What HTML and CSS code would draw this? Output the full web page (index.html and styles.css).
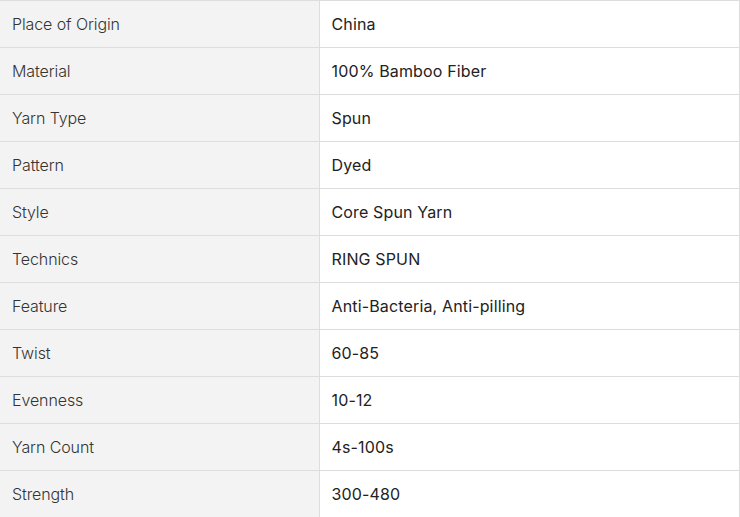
FILE: index.html
```html
<!DOCTYPE html>
<html lang="en">
<head>
<meta charset="utf-8">
<title>Specifications</title>
<link rel="stylesheet" href="styles.css">
</head>
<body>
<table class="spec">
  <tbody>
    <tr><th>Place of Origin</th><td>China</td></tr>
    <tr><th>Material</th><td>100% Bamboo Fiber</td></tr>
    <tr><th>Yarn Type</th><td>Spun</td></tr>
    <tr><th>Pattern</th><td>Dyed</td></tr>
    <tr><th>Style</th><td>Core Spun Yarn</td></tr>
    <tr><th>Technics</th><td>RING SPUN</td></tr>
    <tr><th>Feature</th><td>Anti-Bacteria, Anti-pilling</td></tr>
    <tr><th>Twist</th><td>60-85</td></tr>
    <tr><th>Evenness</th><td>10-12</td></tr>
    <tr><th>Yarn Count</th><td>4s-100s</td></tr>
    <tr><th>Strength</th><td>300-480</td></tr>
  </tbody>
</table>
</body>
</html>
```
FILE: styles.css
```css
html, body {
  margin: 0;
  padding: 0;
  background: #fff;
}
.spec {
  width: 740px;
  border-collapse: collapse;
  table-layout: fixed;
  font-family: Inter, "Liberation Sans", sans-serif;
  font-size: 16px;
}
.spec th,
.spec td {
  height: 47px;
  padding: 0 12px;
  border-top: 1px solid #dddddd;
  border-bottom: 1px solid #dddddd;
  text-align: left;
  vertical-align: middle;
  box-sizing: border-box;
}
.spec th {
  width: 319px;
  background: #f3f3f3;
  font-weight: 300;
  letter-spacing: -0.1px;
  color: #333333;
  border-right: 1px solid #dddddd;
}
.spec td {
  background: #ffffff;
  font-weight: 400;
  letter-spacing: 0.15px;
  color: #222222;
  border-right: 1px solid #dddddd;
}
```
